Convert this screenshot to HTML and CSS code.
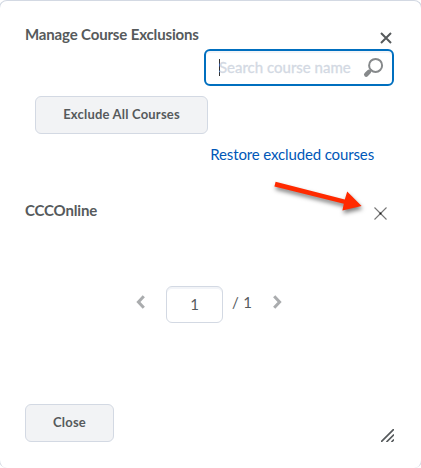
FILE: index.html
```html
<!DOCTYPE html>
<html lang="en">
<head>
    <meta charset="UTF-8">
    <meta name="viewport" content="width=device-width, initial-scale=1.0">
    <title>Manage Course Exclusions</title>
    <link rel="stylesheet" href="styles.css">
</head>
<body>

    <div class="dialog" role="dialog">
        <header class="dialog-header">
            <h2 class="dialog-title">Manage Course Exclusions</h2>
            <svg class="dialog-close" width="12" height="12" viewBox="0 0 12 12">
                <path d="M1 1L11 11M11 1L1 11"/>
            </svg>
        </header>

        <div class="search">
            <span class="caret"></span>
            <span class="placeholder">Search course name</span>
            <svg class="search-icon" width="22" height="22" viewBox="0 0 22 22">
                <circle cx="13.6" cy="8.4" r="6.5"/>
                <path class="handle" d="M7 14.8L4.2 17.6"/>
                <path class="neck" d="M9.6 12.6L7 15"/>
            </svg>
        </div>

        <button class="btn exclude">Exclude All Courses</button>
        <a class="restore">Restore excluded courses</a>

        <div class="course">
            <h3 class="course-name">CCCOnline</h3>
            <svg class="course-remove" width="13" height="13" viewBox="0 0 13 13">
                <path d="M.5 .5L12.5 12.5M12.5 .5L.5 12.5"/>
                <circle cx="6.5" cy="6.5" r="1"/>
            </svg>
        </div>

        <div class="pager">
            <svg class="chevron" width="10" height="14" viewBox="0 0 10 14">
                <path d="M7.8 1.2L2.4 7L7.8 12.8"/>
            </svg>
            <div class="page-number">1</div>
            <span class="page-total">/ 1</span>
            <svg class="chevron" width="10" height="14" viewBox="0 0 10 14">
                <path d="M2.2 1.2L7.6 7L2.2 12.8"/>
            </svg>
        </div>

        <footer class="dialog-footer">
            <button class="btn close">Close</button>
            <svg class="resize" width="13" height="13" viewBox="0 0 13 13">
                <path d="M0 13L13 0M5.5 13L13 5.5M10.5 13L13 10.5"/>
            </svg>
        </footer>

        <!-- arrow pointing at the remove icon -->
        <svg class="arrow" width="100" height="46" viewBox="0 0 100 46">
            <path d="M4.6 5.8L73.8 23.4L76.2 15.6L90.6 30L71.4 34.6L72.8 27.8L3.4 10.4Z"/>
        </svg>
    </div>

</body>
</html>
```

FILE: styles.css
```css
body {
    margin: 0;
    font-family: Lato, sans-serif;
    font-size: 15px;
    line-height: 20px;
    color: #565a5c;
    background-color: #fff;
    overflow: hidden;
}

.dialog {
    position: relative;
    display: flex;
    flex-direction: column;
    box-sizing: border-box;
    height: 468px;
    margin: 0 -1px;
    padding: 23px 27px 0 25px;
    border: 1px solid #d3d9e3;
    border-bottom: 0;
    border-radius: 8px;
}

.dialog-header {
    display: flex;
    justify-content: space-between;
    height: 25px;
}

.dialog-title,
.course-name {
    margin: 0;
    font-size: 15px;
    font-weight: bold;
    letter-spacing: -0.15px;
}

.dialog-close {
    margin-top: 8px;
    margin-right: 2px;
    fill: none;
    stroke: #565a5c;
    stroke-width: 2;
}

.search {
    display: flex;
    align-items: center;
    align-self: flex-end;
    box-sizing: border-box;
    width: 190px;
    height: 37px;
    padding-left: 13px;
    border: 2px solid #006fbf;
    border-radius: 6px;
    box-shadow: inset 0 2px 0 #f2f4f8;
}

.caret {
    width: 1px;
    height: 17px;
    margin-right: -1px;
    background-color: #333;
}

.placeholder {
    width: 133px;
    margin-top: -1px;
    color: #d3d9e3;
    white-space: nowrap;
    -webkit-text-stroke: 0.3px #d3d9e3;
}

.search-icon {
    margin-left: 10px;
    fill: none;
    stroke: #86898b;
    stroke-width: 2;
}

.search-icon .handle {
    stroke-width: 4.4;
    stroke-linecap: round;
}

.search-icon .neck {
    stroke-width: 2.4;
}

.btn {
    box-sizing: border-box;
    height: 38px;
    padding: 0 0 2px;
    border: 1px solid #d3d9e3;
    border-radius: 6px;
    background-color: #f2f3f5;
    color: #565a5c;
    font-family: inherit;
    font-size: 13px;
    font-weight: bold;
    letter-spacing: 0.2px;
}

.exclude {
    width: 173px;
    margin: 10px 0 0 10px;
}

.restore {
    align-self: flex-end;
    margin: 10px 20px 0 0;
    color: #0057b8;
    letter-spacing: -0.13px;
}

.course {
    display: flex;
    justify-content: space-between;
    margin-top: 36px;
    padding-right: 7px;
}

.course-remove {
    margin-top: 7px;
    fill: #111;
    stroke: #777;
    stroke-width: 1.1;
}

.course-remove circle {
    stroke: none;
}

.pager {
    display: flex;
    align-items: center;
    height: 37px;
    margin: 66px 0 0 111px;
}

.chevron {
    margin-top: -5px;
    fill: none;
    stroke: #aaacae;
    stroke-width: 3;
}

.page-number {
    box-sizing: border-box;
    width: 57px;
    height: 37px;
    margin: 0 9px 0 20px;
    border: 1px solid #d3d9e3;
    border-radius: 6px;
    box-shadow: inset 0 2px 0 #f2f4f8;
    line-height: 35px;
    text-align: center;
}

.page-total {
    width: 40px;
    margin-top: -5px;
    letter-spacing: 0.3px;
}

.dialog-footer {
    display: flex;
    justify-content: space-between;
    margin-top: 81px;
}

.close {
    width: 89px;
}

.resize {
    margin-top: 25px;
    fill: none;
    stroke: #565a5c;
    stroke-width: 1.7;
}

.arrow {
    position: absolute;
    top: 175px;
    left: 271px;
    fill: #ff2a00;
    filter: drop-shadow(1px 3px 2px rgba(0, 0, 0, 0.5));
    overflow: visible;
}
```
